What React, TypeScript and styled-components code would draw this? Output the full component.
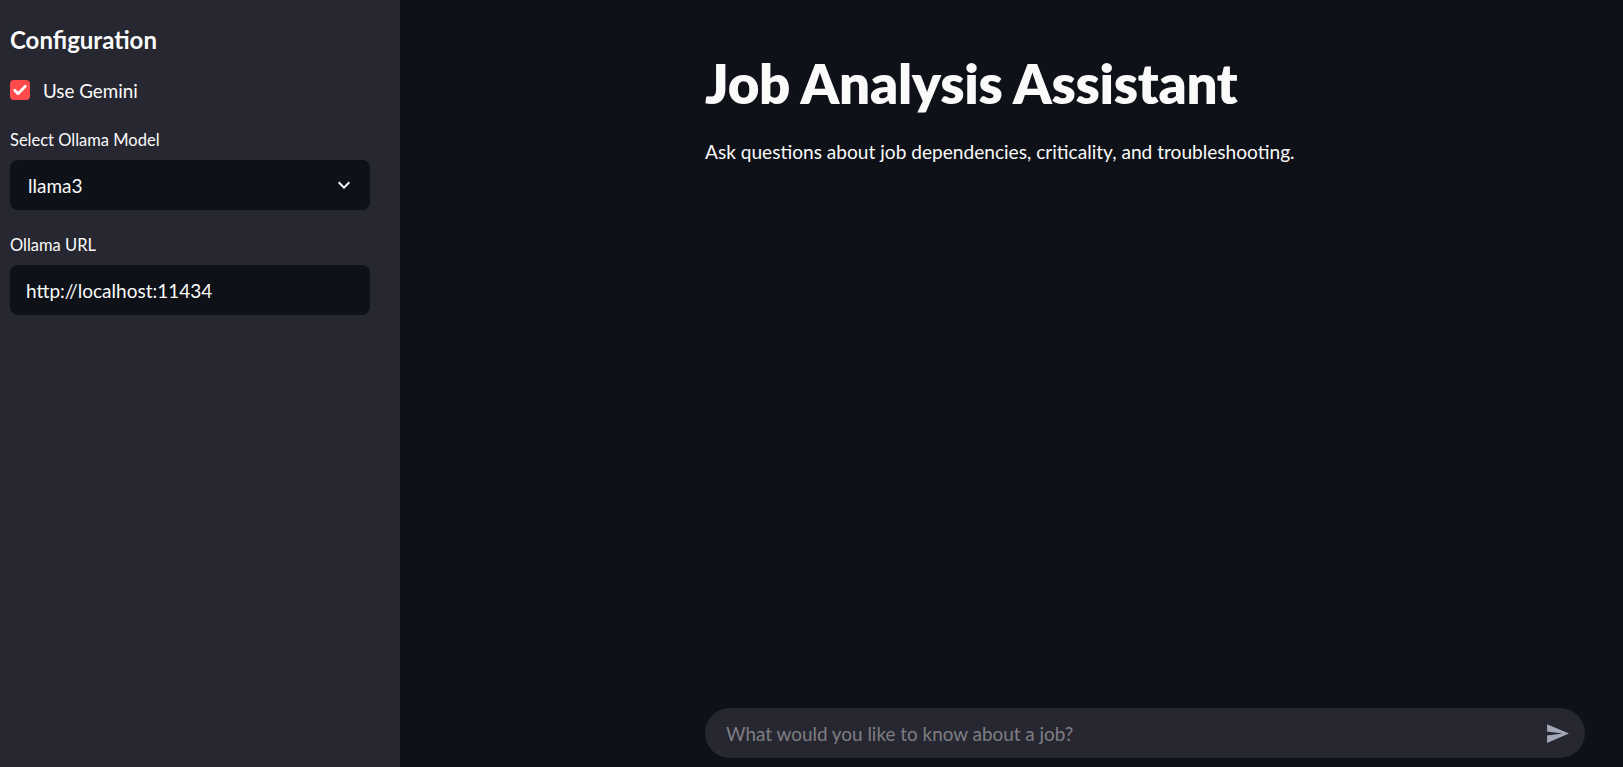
import React from "react";
import styled, { createGlobalStyle } from "styled-components";

const GlobalStyle = createGlobalStyle`
  html, body {
    margin: 0;
    padding: 0;
    background: #0e1117;
  }
  body {
    font-family: "Lato", "Noto Sans", sans-serif;
    color: #fafafa;
  }
  * { box-sizing: border-box; }
`;

const Shell = styled.div`
  display: flex;
  height: 100vh;
  width: 100%;
  overflow: hidden;
`;

const Sidebar = styled.aside`
  width: 400px;
  flex-shrink: 0;
  background: #262730;
  padding: 20px 30px 0 10px;
  display: flex;
  flex-direction: column;
`;

const SideHeading = styled.h2`
  margin: 0;
  font-size: 24px;
  line-height: 40px;
  font-weight: 700;
  color: #fafafa;
`;

const CheckRow = styled.label`
  display: flex;
  align-items: center;
  gap: 13px;
  height: 20px;
  margin-top: 20px;
  font-size: 18.8px;
  color: #fafafa;
`;

const CheckBox = styled.span`
  width: 20px;
  height: 20px;
  border-radius: 4px;
  background: #ff4b4b;
  display: flex;
  align-items: center;
  justify-content: center;
`;

const FieldLabel = styled.div<{ $top: number }>`
  margin-top: ${(p) => p.$top}px;
  font-size: 16.5px;
  line-height: 20px;
  color: #fafafa;
`;

const FieldBox = styled.div<{ $padLeft: number }>`
  margin-top: 10px;
  height: 50px;
  border-radius: 8px;
  background: #0e1117;
  display: flex;
  align-items: center;
  justify-content: space-between;
  padding: 0 14px 0 ${(p) => p.$padLeft}px;
  font-size: 19px;
  color: #fafafa;
`;

const Main = styled.main`
  flex: 1;
  display: flex;
  flex-direction: column;
  padding: 48px 0 9px 305px;
`;

const Title = styled.h1`
  margin: 0;
  font-size: 54.6px;
  line-height: 70px;
  font-weight: 800;
  color: #fafafa;
  letter-spacing: -0.3px;
`;

const Subtitle = styled.p`
  margin: 19px 0 0;
  font-size: 19.1px;
  line-height: 30px;
  color: #fafafa;
`;

const Spacer = styled.div`
  flex: 1;
`;

const ChatBar = styled.div`
  width: 880px;
  height: 50px;
  border-radius: 25px;
  background: #262730;
  display: flex;
  align-items: center;
  padding: 0 15px 0 21px;
`;

const ChatPlaceholder = styled.span`
  flex: 1;
  font-size: 18.9px;
  color: rgba(250, 250, 250, 0.42);
`;

const SendIcon = () => (
  <svg width="25" height="25" viewBox="0 0 24 24" fill="#a3a8b8">
    <path d="M2.01 21L23 12 2.01 3 2 10l15 2-15 2z" />
  </svg>
);

const ChevronIcon = () => (
  <svg width="24" height="24" viewBox="0 0 24 24" fill="#fafafa">
    <path d="M16.59 8.59L12 13.17 7.41 8.59 6 10l6 6 6-6z" />
  </svg>
);

const CheckIcon = () => (
  <svg width="16" height="16" viewBox="0 0 24 24" fill="none" stroke="#fff" strokeWidth="4.2" strokeLinecap="round" strokeLinejoin="round">
    <path d="M4 12.5l5 5L20 6.5" />
  </svg>
);

export default function App() {
  return (
    <>
      <GlobalStyle />
      <Shell>
        <Sidebar>
          <SideHeading>Configuration</SideHeading>
          <CheckRow>
            <CheckBox>
              <CheckIcon />
            </CheckBox>
            Use Gemini
          </CheckRow>
          <FieldLabel $top={30}>Select Ollama Model</FieldLabel>
          <FieldBox $padLeft={18}>
            <span>llama3</span>
            <ChevronIcon />
          </FieldBox>
          <FieldLabel $top={25}>Ollama URL</FieldLabel>
          <FieldBox $padLeft={16}>
            <span>http://localhost:11434</span>
          </FieldBox>
        </Sidebar>
        <Main>
          <Title>Job Analysis Assistant</Title>
          <Subtitle>Ask questions about job dependencies, criticality, and troubleshooting.</Subtitle>
          <Spacer />
          <ChatBar>
            <ChatPlaceholder>What would you like to know about a job?</ChatPlaceholder>
            <SendIcon />
          </ChatBar>
        </Main>
      </Shell>
    </>
  );
}
